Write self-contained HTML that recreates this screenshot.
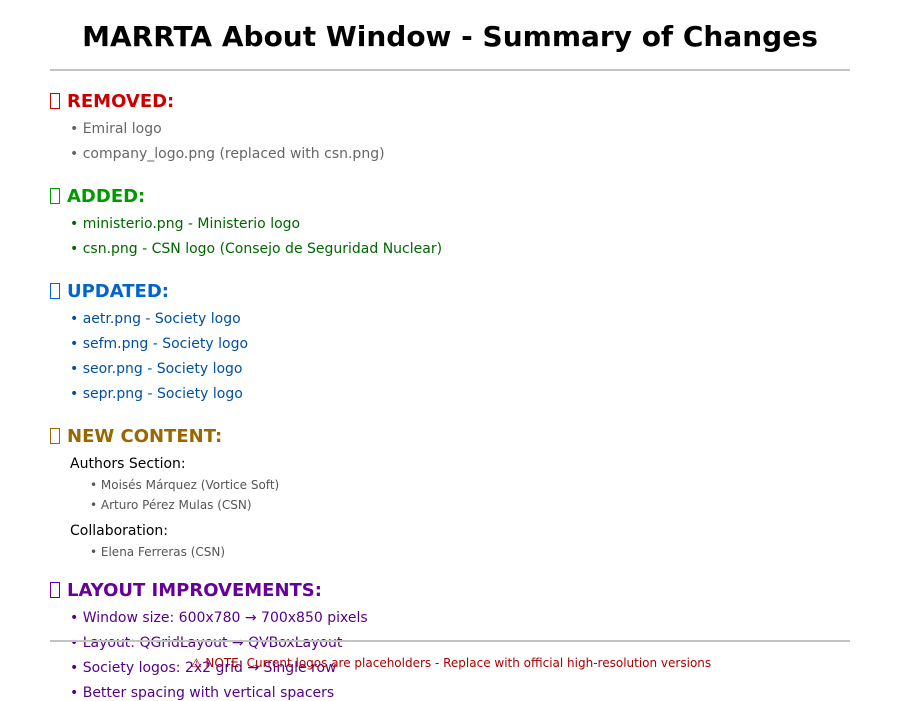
<!DOCTYPE html>
<html><head><meta charset="utf-8"><style>
body{margin:0;width:900px;height:700px;background:#fff;position:relative;overflow:hidden;font-family:"DejaVu Sans","Liberation Sans",sans-serif;}
div{position:absolute;white-space:nowrap;}
.t{left:0;width:900px;text-align:center;font-size:28px;font-weight:bold;line-height:32px;top:21px;color:#000;}
.hr{left:50px;width:800px;height:2px;background:#c4c4c4;}
.h{left:50px;font-size:18px;font-weight:bold;line-height:22px;}
.h span{display:inline-block;width:8px;height:14px;border:1.3px solid currentColor;vertical-align:-2px;margin-right:7px;}
.i{left:70px;font-size:14px;line-height:16px;}
.s{left:90px;font-size:12px;line-height:14px;color:#555;}
</style></head><body>
<div class="t">MARRTA About Window - Summary of Changes</div>
<div class="hr" style="top:69px"></div>

<div class="h" style="top:91px;color:#cc0000"><span></span>REMOVED:</div>
<div class="i" style="top:121px;color:#666">• Emiral logo</div>
<div class="i" style="top:146px;color:#666">• company_logo.png (replaced with csn.png)</div>

<div class="h" style="top:186px;color:#009900"><span></span>ADDED:</div>
<div class="i" style="top:216px;color:#006600">• ministerio.png - Ministerio logo</div>
<div class="i" style="top:241px;color:#006600">• csn.png - CSN logo (Consejo de Seguridad Nuclear)</div>

<div class="h" style="top:281px;color:#0066cc"><span></span>UPDATED:</div>
<div class="i" style="top:311px;color:#0050a0">• aetr.png - Society logo</div>
<div class="i" style="top:336px;color:#0050a0">• sefm.png - Society logo</div>
<div class="i" style="top:361px;color:#0050a0">• seor.png - Society logo</div>
<div class="i" style="top:386px;color:#0050a0">• sepr.png - Society logo</div>

<div class="h" style="top:426px;color:#996600"><span></span>NEW CONTENT:</div>
<div class="i" style="top:456px;color:#000">Authors Section:</div>
<div class="s" style="top:478px">• Moisés Márquez (Vortice Soft)</div>
<div class="s" style="top:498px">• Arturo Pérez Mulas (CSN)</div>
<div class="i" style="top:523px;color:#000">Collaboration:</div>
<div class="s" style="top:545px">• Elena Ferreras (CSN)</div>

<div class="h" style="top:580px;color:#660099"><span></span>LAYOUT IMPROVEMENTS:</div>
<div class="i" style="top:610px;color:#550088">• Window size: 600x780 → 700x850 pixels</div>
<div class="i" style="top:635px;color:#550088">• Layout: QGridLayout → QVBoxLayout</div>
<div class="i" style="top:660px;color:#550088">• Society logos: 2x2 grid → Single row</div>
<div class="i" style="top:685px;color:#550088">• Better spacing with vertical spacers</div>

<div class="hr" style="top:640px"></div>
<div style="left:0;width:902px;text-align:center;top:656px;font-size:12px;line-height:14px;color:#aa0000">⚠ NOTE: Current logos are placeholders - Replace with official high-resolution versions</div>
</body></html>
